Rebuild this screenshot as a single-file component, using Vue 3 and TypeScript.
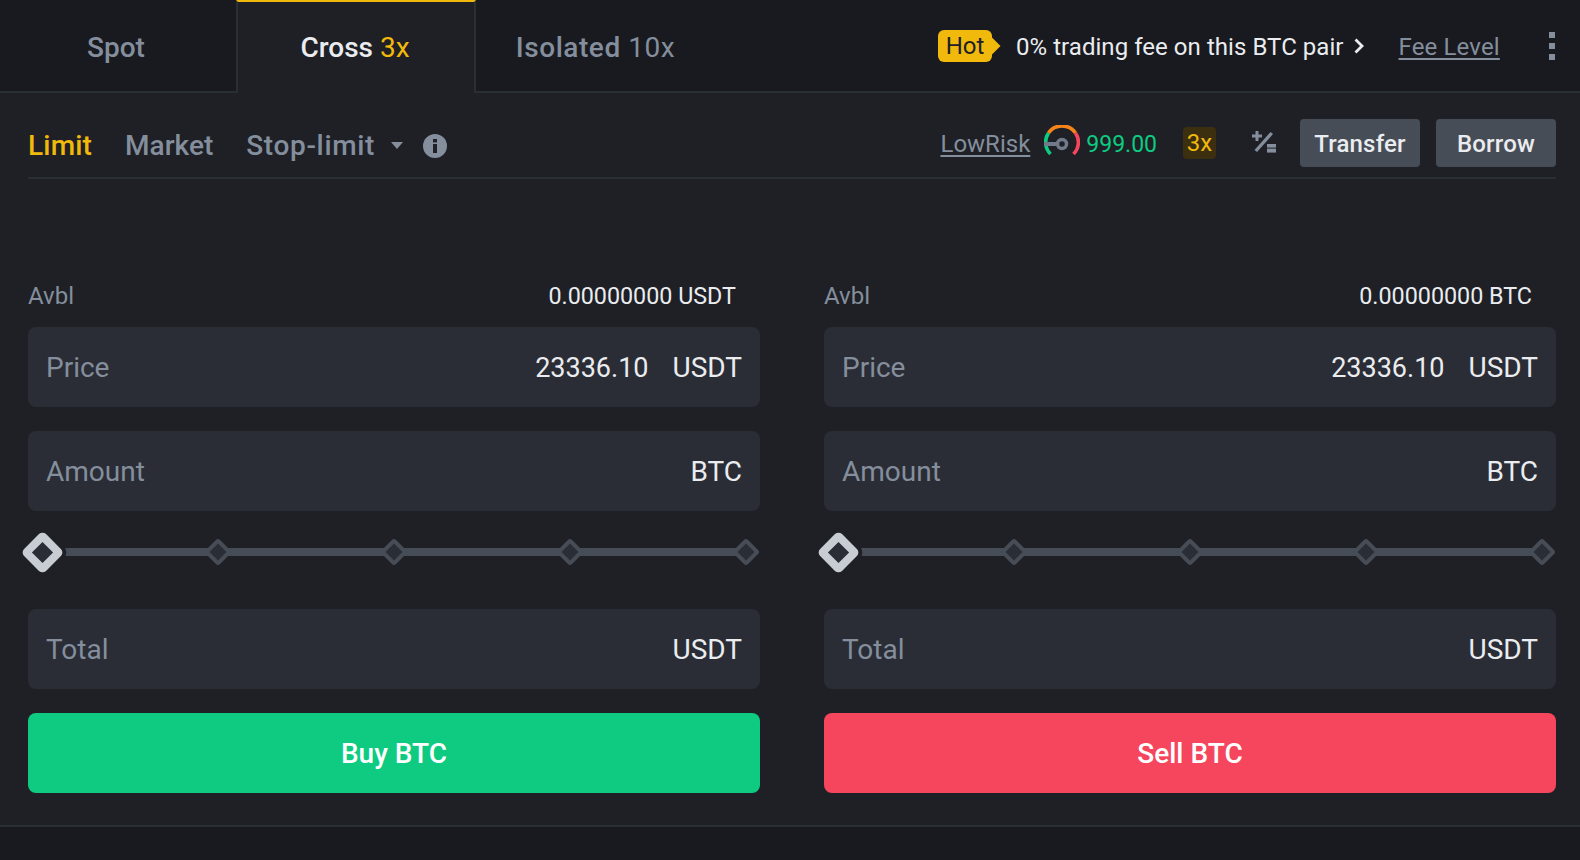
<script setup lang="ts">
interface Field { label: string; value?: string; unit: string }
interface Side { avbl: string; action: string; kind: string; fields: Field[]; total: Field }
const sides: Side[] = [
  { avbl: '0.00000000 USDT', action: 'Buy BTC', kind: 'buy',
    fields: [{ label: 'Price', value: '23336.10', unit: 'USDT' }, { label: 'Amount', unit: 'BTC' }],
    total: { label: 'Total', unit: 'USDT' } },
  { avbl: '0.00000000 BTC', action: 'Sell BTC', kind: 'sell',
    fields: [{ label: 'Price', value: '23336.10', unit: 'USDT' }, { label: 'Amount', unit: 'BTC' }],
    total: { label: 'Total', unit: 'USDT' } },
]
const stops = [0, 1, 2, 3, 4]
</script>

<template>
  <div class="page">
    <header class="tabs">
      <div class="tab tab-spot">Spot</div>
      <div class="tab tab-cross"><span class="medium">Cross</span>&nbsp;<span class="yellow">3x</span></div>
      <div class="tab tab-iso"><span class="medium">Isolated</span>&nbsp;<span>10x</span></div>
      <div class="promo">
        <span class="hot">Hot</span>
        <span class="promo-text">0% trading fee on this BTC pair</span>
        <svg class="chev" width="12" height="18" viewBox="0 0 12 18"><path d="M2.500 2.500 9 9l-6.500 6.500" fill="none" stroke="#eaecef" stroke-width="2.800"/></svg>
        <a class="fee">Fee Level</a>
        <span class="kebab"><i></i><i></i><i></i></span>
      </div>
    </header>

    <main class="panel">
      <div class="orders">
        <span class="otype active">Limit</span>
        <span class="otype">Market</span>
        <span class="otype stop">Stop-limit</span>
        <svg class="caret" width="12" height="7" viewBox="0 0 12 7"><path d="M0 0h12L6 7z" fill="#848e9c"/></svg>
        <svg class="info" width="24" height="24" viewBox="0 0 24 24">
          <circle cx="12" cy="12" r="12" fill="#848e9c"/>
          <rect x="10" y="10" width="4" height="9" fill="#1e2026"/>
          <rect x="10" y="5" width="4" height="3.400" fill="#1e2026"/>
        </svg>
        <div class="risk">
          <a class="lowrisk">LowRisk</a>
          <svg class="gauge" width="36" height="32" viewBox="0 0 36 32">
            <g fill="none" stroke-width="3.600">
              <path d="M6.500 29 A16.500 16.500 0 0 1 4.500 8" stroke="#0ecb81"/>
              <path d="M4.500 8 A16.500 16.500 0 0 1 31.500 8" stroke="#f7841a"/>
              <path d="M31.500 8 A16.500 16.500 0 0 1 29.500 29" stroke="#f6465d"/>
            </g>
            <rect x="0" y="17" width="14" height="4" fill="#707a8a"/>
            <circle cx="18" cy="19" r="4.500" fill="none" stroke="#707a8a" stroke-width="3.500"/>
          </svg>
          <span class="ratio">999.00</span>
          <span class="lev">3x</span>
          <svg class="calc" width="26" height="24" viewBox="0 0 26 24">
            <g fill="#848e9c">
              <path d="M3.500 0h3v3.500H10v3H6.500V10h-3V6.500H0v-3h3.500z"/>
              <path d="M18.500 1 21 3 5 21 2.500 19z"/>
              <rect x="15" y="13" width="9" height="3.600"/>
              <rect x="15" y="17.600" width="9" height="4"/>
            </g>
          </svg>
          <button class="btn transfer">Transfer</button>
          <button class="btn">Borrow</button>
        </div>
      </div>

      <div class="forms">
        <section v-for="s in sides" :key="s.kind" class="form">
          <div class="avbl"><span class="avbl-l">Avbl</span><span class="avbl-v">{{ s.avbl }}</span></div>
          <div class="stack">
            <div v-for="f in s.fields" :key="f.label" class="field">
              <span class="flabel">{{ f.label }}</span>
              <span v-if="f.value" class="fvalue">{{ f.value }}</span>
              <span class="funit">{{ f.unit }}</span>
            </div>
          </div>
          <div class="slider">
            <span class="rail"></span>
            <span v-for="n in stops" :key="n" class="stopbox"><i :class="n === 0 ? 'dia big' : 'dia'"></i></span>
          </div>
          <div class="field">
            <span class="flabel">{{ s.total.label }}</span>
            <span class="funit">{{ s.total.unit }}</span>
          </div>
          <button class="action" :class="s.kind">{{ s.action }}</button>
        </section>
      </div>
    </main>
  </div>
</template>

<style>
html, body { margin: 0; background: #181a20; }
</style>

<style scoped>
.page {
  width: 1580px;
  font-family: Roboto, "Noto Sans", sans-serif;
  color: #eaecef;
  background: #181a20;
  height: 860px;
  overflow: hidden;
}
.tabs { display: flex; align-items: stretch; height: 93px; }
.tab {
  display: flex; align-items: center; justify-content: center;
  font-size: 28px; color: #848e9c; box-sizing: border-box;
  border-bottom: 2px solid #2a2e35; padding-top: 4px;
}
.medium { font-weight: 500; }
.tab-spot { width: 236px; font-weight: 500; padding-right: 4px; }
.tab-cross {
  width: 240px; background: #1e2026; color: #eaecef; padding: 0 2px 0 0;
  border-top: 2px solid #f0b90b; border-bottom: 0;
  border-left: 2px solid #2a2e35; border-right: 2px solid #2a2e35;
}
.yellow { color: #f0b90b; }
.tab-iso { width: 242px; padding-right: 3px; letter-spacing: 0.55px; }
.promo {
  flex: 1; display: flex; align-items: center;
  border-bottom: 2px solid #2a2e35; padding-left: 220px;
  box-sizing: border-box;
}
.hot {
  position: relative; background: #f0b90b; color: #1e2026; font-size: 24px;
  height: 32px; width: 54px; border-radius: 6px; display: flex; align-items: center;
  justify-content: center;
}
.hot::after {
  content: ""; position: absolute; right: -6px; top: 10px; width: 12px; height: 12px;
  background: #f0b90b; transform: rotate(45deg);
}
.promo-text { margin-left: 24px; padding-top: 2px; font-size: 24px; letter-spacing: 0.05px; white-space: nowrap; }
.chev { margin-left: 9px; }
.fee { margin-left: 34px; padding-top: 2px; font-size: 24px; letter-spacing: 0.15px; color: #848e9c; text-decoration: underline; text-underline-offset: 3px; white-space: nowrap; }
.kebab { margin-left: 49px; display: flex; flex-direction: column; gap: 5px; }
.kebab i { display: block; width: 6px; height: 6px; background: #848e9c; }

.panel {
  background: #1e2026; padding: 0 24px 32px 28px;
  border-bottom: 2px solid #2a2e35;
}
.orders {
  height: 86px; padding-top: 15px; display: flex; align-items: center; box-sizing: border-box;
  border-bottom: 2px solid #2a2e35;
}
.otype { font-size: 28px; font-weight: 500; color: #848e9c; margin-right: 33px; padding-top: 5px; white-space: nowrap; }
.otype.active { color: #f0b90b; letter-spacing: 0.2px; }
.otype.stop { margin-right: 16px; letter-spacing: 0.65px; }
.caret { margin-right: 20px; margin-top: 5px; }
.info { margin-top: 6px; }
.risk { margin-left: auto; display: flex; align-items: center; }
.lowrisk { font-size: 24px; padding-top: 3px; color: #848e9c; text-decoration: underline; text-underline-offset: 3px; }
.gauge { margin-left: 14px; margin-bottom: 4px; }
.ratio { margin-left: 6px; padding-top: 3px; font-size: 23px; color: #0ecb81; }
.lev {
  margin-left: 26px; width: 33px; height: 32px; border-radius: 4px; background: #3c2f10;
  color: #f0b90b; font-size: 24px; display: flex; align-items: center; justify-content: center;
}
.calc { margin-left: 36px; }
.btn {
  font: inherit; font-size: 24px; font-weight: 500; letter-spacing: 0.2px; color: #eaecef; background: #474d57;
  border: 0; border-radius: 4px; width: 120px; height: 48px; padding: 3px 0 0; margin-left: 16px;
}
.transfer { margin-left: 22px; }

.forms { display: grid; grid-template-columns: 732px 732px; column-gap: 64px; padding-top: 100px; }
.form { display: flex; flex-direction: column; }
.avbl {
  display: flex; justify-content: space-between; align-items: center; height: 32px;
  margin-bottom: 16px; padding-right: 24px; padding-top: 2px; box-sizing: border-box; font-size: 24px;
}
.avbl-l { color: #848e9c; }
.avbl-v { font-size: 23.300px; }
.stack { display: flex; flex-direction: column; gap: 24px; }
.field {
  display: flex; align-items: center; height: 80px; box-sizing: border-box; padding: 0 18px;
  background: #2a2d35; border-radius: 8px; font-size: 28px;
}
.flabel { color: #848e9c; margin-right: auto; }
.fvalue { margin-right: 24px; font-size: 27px; padding-top: 2px; }
.slider {
  position: relative; display: flex; justify-content: space-between; height: 48px;
  margin: 17px 0 33px;
}
.rail { position: absolute; left: 14px; right: 14px; top: 20px; height: 8px; background: #474d57; }
.stopbox { position: relative; width: 28px; display: flex; align-items: center; justify-content: center; }
.dia {
  display: block; width: 20px; height: 20px; box-sizing: border-box; transform: rotate(45deg);
  border: 4px solid #474d57; background: #2a2d35; border-radius: 3px; flex: none;
}
.dia.big {
  width: 31px; height: 31px; border: 8.500px solid #c8ccd3; border-radius: 5px;
  box-shadow: 0 0 0 4px #1e2026;
}
.action {
  font: inherit; font-size: 28px; font-weight: 500; color: #fff; border: 0; border-radius: 8px;
  height: 80px; margin-top: 24px;
}
.buy { background: #0ecb81; }
.sell { background: #f6465d; }
</style>
